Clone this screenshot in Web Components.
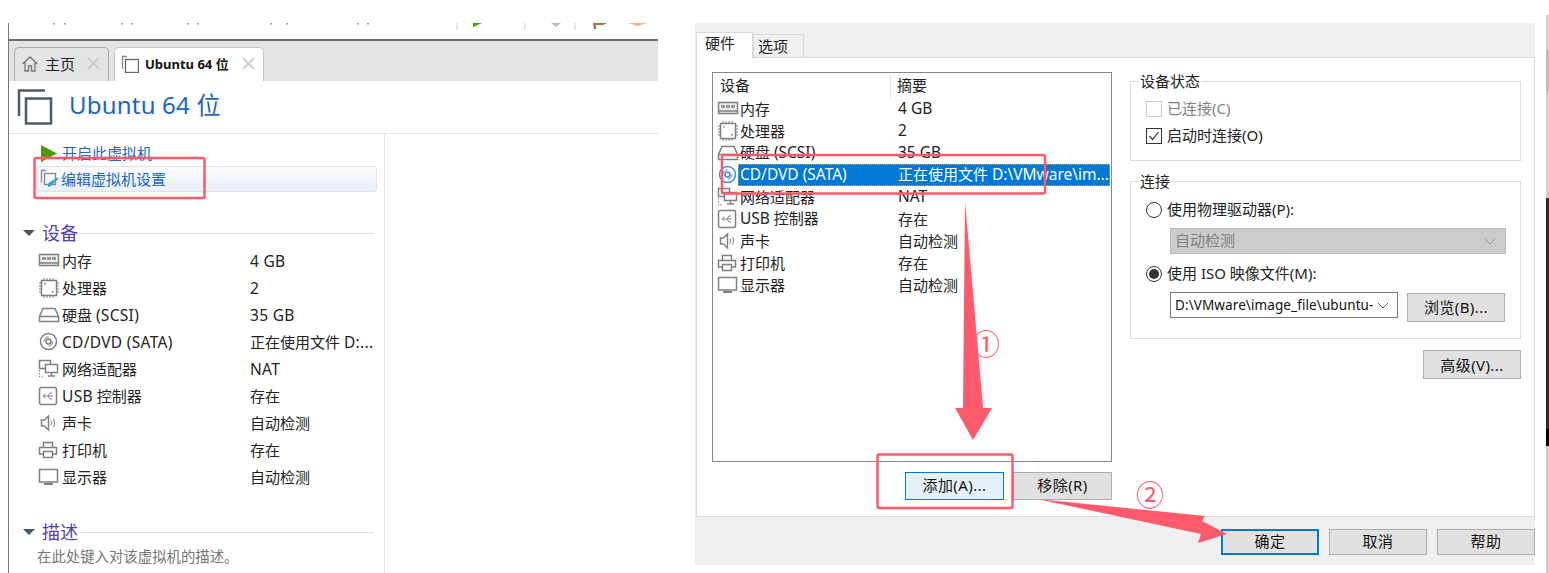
<!DOCTYPE html>
<html lang="zh">
<head>
<meta charset="utf-8">
<title>Ubuntu 64 位</title>
<style>
  html, body { margin: 0; padding: 0; background: #fff; }
  body {
    width: 1549px;
    height: 573px;
    overflow: hidden;
    position: relative;
    font-family: "Noto Sans", "Noto Sans CJK SC", sans-serif;
    font-size: 15px;
    color: #222;
  }
  .page { display: flex; align-items: flex-start; }
</style>
</head>
<body>
<div class="page">
  <vm-library></vm-library>
  <vm-settings></vm-settings>
</div>
<red-marks></red-marks>

<script>
// small grey device icons, shared by both panels
const ICONS = {
  memory: `<rect x="1.5" y="3.5" width="19" height="11" fill="#eee"/><rect x="4" y="6" width="4" height="3" fill="#999" stroke="none"/><rect x="9" y="6" width="4" height="3" fill="#999" stroke="none"/><rect x="14" y="6" width="4" height="3" fill="#999" stroke="none"/><path d="M2 12h18"/>`,
  cpu: `<rect x="3.5" y="2.5" width="15" height="15"/><path d="M6 0v2M9 0v2M12 0v2M15 0v2M6 18v2M9 18v2M12 18v2M15 18v2M1 5h2M1 8h2M1 11h2M1 14h2M19 5h2M19 8h2M19 11h2M19 14h2" stroke-width="1"/><rect x="6" y="5" width="1.5" height="1.5" fill="#777" stroke="none"/><rect x="14" y="13" width="1.5" height="1.5" fill="#777" stroke="none"/>`,
  disk: `<path d="M1.5 11.5 5 3.5h12l3.5 8v5h-19zM1.5 11.5h19"/>`,
  cd: `<circle cx="10.5" cy="9.5" r="8"/><circle cx="10.5" cy="9.5" r="2.5"/><path d="M6 9.5a4.5 4.5 0 0 1 4.5-4.5M15 9.5a4.5 4.5 0 0 1-4.5 4.5" stroke-width="1"/>`,
  net: `<rect x="1.5" y="1.5" width="11" height="8" fill="#fff"/><rect x="7.5" y="5.5" width="12" height="8" fill="#fff"/><path d="M13.5 13.5v3M10 17h7"/><path d="M1.5 11v7h5" stroke-dasharray="1.5 1.5" stroke-width="1"/>`,
  usb: `<rect x="1.5" y="1.5" width="17" height="17" rx="2"/><path d="M5 10h10M7.5 8 5 10l2.5 2M10 10l2-3h2M10 10l2 3h2" stroke-width="1"/>`,
  sound: `<path d="M3.5 7v6h3l4 4V3l-4 4z"/><path d="M13 7.5q1.5 2.5 0 5M15.5 6q2.5 4 0 8" stroke-width="1"/>`,
  printer: `<path d="M5.5 7V2.5h9V7M5.5 14h-4V7.5h17V14h-4"/><rect x="5.5" y="11.5" width="9" height="6"/>`,
  monitor: `<rect x="1.5" y="2.5" width="18" height="12.5"/><path d="M6 17h9" stroke-width="2"/>`
};

function iconSvg(name) {
  return `<svg width="22" height="20" viewBox="0 0 22 20" fill="none" stroke="#808080" stroke-width="1.5">${ICONS[name]}</svg>`;
}

// the latin text of the reference runs wider than the CJK next to it
function latin(text) {
  return text.replace(/[\x21-\x7e]+(?: [\x21-\x7e]+)*/g, m => `<span class="l">${m}</span>`);
}

const DEVICES = [
  ["memory", "内存", "4 GB"],
  ["cpu", "处理器", "2"],
  ["disk", "硬盘 (SCSI)", "35 GB"],
  ["cd", "CD/DVD (SATA)", "正在使用文件 D:..."],
  ["net", "网络适配器", "NAT"],
  ["usb", "USB 控制器", "存在"],
  ["sound", "声卡", "自动检测"],
  ["printer", "打印机", "存在"],
  ["monitor", "显示器", "自动检测"]
];

// section heading of the left panel: triangle, violet title, thin rule
class SectionHead extends HTMLElement {
  constructor() {
    super();
    this.attachShadow({ mode: "open" });
    this.shadowRoot.innerHTML = `
    <style>
      :host { display: flex; align-items: center; height: 26px; margin-right: 3px; }
      .arrow { width: 0; height: 0; margin-left: 14px; border: 6px solid transparent; border-top: 6px solid #4a5560; border-bottom: 0; }
      .title { margin-left: 7px; font-size: 18px; color: #5140ad; line-height: 26px; }
      .rule { flex: 1; height: 1px; background: #ddd; margin-left: 3px; }
    </style>
    <span class="arrow"></span><span class="title"><slot></slot></span><span class="rule"></span>`;
  }
}
customElements.define("section-head", SectionHead);

class VmLibrary extends HTMLElement {
  constructor() {
    super();
    this.attachShadow({ mode: "open" });
    const rows = DEVICES.map(d => `
      <div class="row">
        <span class="ic">${iconSvg(d[0])}</span>
        <span class="name">${latin(d[1])}</span>
        <span class="val">${latin(d[2])}</span>
      </div>`).join("");
    this.shadowRoot.innerHTML = `
    <style>
      :host { display: block; width: 650px; height: 573px; margin-left: 8px; flex: none; box-sizing: border-box; padding-top: 23px; }
      .l { font-size: 15.5px; letter-spacing: 0.3px; }
      .frame { border-left: 1px solid #777; height: 550px; display: flex; flex-direction: column; }
      .toolbar { height: 16px; border-bottom: 2px solid #6c6c6c; flex: none; }
      .toolbar svg { display: block; }
      .tabs { height: 40px; background: #e3e4e6; display: flex; align-items: flex-end; padding-left: 5px; gap: 5px; flex: none; }
      .tab { height: 34px; box-sizing: border-box; border: 1px solid #aaa; border-bottom: 0; border-radius: 5px 5px 0 0; display: flex; align-items: center; font-size: 15px; color: #222; padding-bottom: 2px; }
      .tab.home { width: 95px; padding-left: 6px; }
      .tab.cur { width: 150px; background: #fff; border-color: #c5c5c5; padding-left: 6px; font-weight: bold; font-size: 13px; color: #111; }
      .tab .x { margin-left: auto; margin-right: 8px; }
      .tab .gap { width: 6px; }
      .head { height: 52px; flex: none; border-bottom: 1px solid #e2e2e2; display: flex; align-items: center; padding-left: 8px; }
      .head h1 { margin: 0 0 5px 16px; font-size: 24px; font-weight: normal; color: #1a66c2; line-height: 32px; letter-spacing: 0.2px; }
      .cols { flex: 1; display: flex; }
      .side { width: 376px; box-sizing: border-box; border-right: 1px solid #e2e2e2; padding-right: 7px; }
      .act { display: flex; align-items: center; color: #1a66c2; font-size: 15px; }
      .act svg { flex: none; }
      .act span { margin-bottom: 2px; }
      .act.start { margin-left: 32px; height: 18px; gap: 5px; padding-top: 10px; }
      .act.edit { margin: 4px 0 0 27px; height: 26px; box-sizing: border-box; border: 1px solid #e2e2e2; border-radius: 3px; background: linear-gradient(#fafbfd, #eaf0f9); padding-left: 3px; gap: 1px; }
      .s1 { margin-top: 28px; }
      .s2 { margin-top: 29px; }
      .row { display: flex; align-items: center; height: 27px; padding-left: 29px; color: #222; font-size: 15px; }
      .row .ic { width: 24px; display: flex; }
      .row .name { width: 188px; white-space: nowrap; }
      .row .val { white-space: nowrap; }
      .list { margin-top: 1px; }
      .note { margin: 2px 0 0 28px; font-size: 14.4px; color: #777; white-space: nowrap; line-height: 20px; }
    </style>
    <div class="frame">
      <div class="toolbar">
        <svg width="649" height="8" viewBox="0 0 649 8">
          <path d="M45 0v1.500M56 0v1.500M113 0v1.500M123 0v1.500M179 0v1.500M189 0v1.500M262 0v1.500M278 0v1.500M349 0v1.500M359 0v1.500" stroke="#444"/>
          <path d="M448 0v7M516 0v7M566 0v7" stroke="#ccc"/>
          <path d="M464 0h9l-9 4z" fill="#4e9a06"/>
          <path d="M542 0h10l-5 4z" fill="#bbb"/>
          <path d="M584 0h14l-4 2h-7v4h-2z" fill="#a0704a"/>
          <path d="M619 0h19l-9 3z" fill="#f3b48c"/>
        </svg>
      </div>
      <div class="tabs">
        <div class="tab home">
          <svg width="18" height="18" viewBox="0 0 18 18" fill="none" stroke="#777" stroke-width="1.3"><path d="M1.5 9 9 2l7.500 7M4 7.500V16h3.500v-5h3v5H14V7.500"/></svg>
          <span class="gap"></span>主页
          <svg class="x" width="13" height="13" viewBox="0 0 13 13" stroke="#ccc" stroke-width="1.8"><path d="M1 1l11 11M12 1 1 12"/></svg>
        </div>
        <div class="tab cur">
          <svg width="18" height="18" viewBox="0 0 18 18" fill="none" stroke="#888" stroke-width="1.3"><path d="M6 1.500H1.500V14"/><rect x="4.500" y="4.500" width="13" height="13" stroke="#666"/></svg>
          <span class="gap"></span>Ubuntu 64 位
          <svg class="x" width="13" height="13" viewBox="0 0 13 13" stroke="#ccc" stroke-width="1.8"><path d="M1 1l11 11M12 1 1 12"/></svg>
        </div>
      </div>
      <div class="head">
        <svg width="36" height="36" viewBox="0 0 36 36" fill="none" stroke="#4d5c68" stroke-width="2.5"><path d="M28 1.500H2V27"/><rect x="9" y="9.500" width="25" height="25"/></svg>
        <h1>Ubuntu 64 位</h1>
      </div>
      <div class="cols">
        <div class="side">
          <div class="act start">
            <svg width="16" height="17" viewBox="0 0 16 17"><path d="M0 0 16 8.500 0 17z" fill="#4e9a06"/></svg>
            <span>开启此虚拟机</span>
          </div>
          <div class="act edit">
            <svg width="20" height="20" viewBox="0 0 20 20" fill="none" stroke="#888" stroke-width="1.3"><path d="M6 1.500H1.500v12"/><rect x="4.500" y="4.500" width="11" height="11"/><path d="M8 17l6-5" stroke="#2aa6d6" stroke-width="3"/><path d="M14 12l4-3" stroke="#2aa6d6" stroke-width="2"/></svg>
            <span>编辑虚拟机设置</span>
          </div>
          <section-head class="s1">设备</section-head>
          <div class="list">${rows}</div>
          <section-head class="s2">描述</section-head>
          <div class="note">在此处键入对该虚拟机的描述。</div>
        </div>
      </div>
    </div>`;
  }
}
customElements.define("vm-library", VmLibrary);

// plain windows push button
class DlgButton extends HTMLElement {
  constructor() {
    super();
    this.attachShadow({ mode: "open" });
    this.shadowRoot.innerHTML = `
    <style>
      :host { display: inline-flex; align-items: center; justify-content: center; box-sizing: border-box; height: 26px; border: 1px solid #adadad; background: #e1e1e1; color: #111; font-size: 15px; flex: none; padding-bottom: 3px; letter-spacing: 0.4px; }
      :host([variant="focus"]) { background: #e5f1fb; border-color: #0078d7; }
      :host([variant="default"]) { border: 2px solid #0078d7; }
    </style>
    <slot></slot>`;
  }
}
customElements.define("dlg-button", DlgButton);

// group box with the title sitting on the top border
class GroupBox extends HTMLElement {
  constructor() {
    super();
    this.attachShadow({ mode: "open" });
    this.shadowRoot.innerHTML = `
    <style>
      :host { display: block; position: relative; box-sizing: border-box; border: 1px solid #dcdcdc; }
      .legend { position: absolute; left: 8px; top: -11px; background: #fff; padding: 0 1px; line-height: 20px; font-size: 15px; color: #222; }
    </style>
    <span class="legend">${this.getAttribute("title-text")}</span>
    <slot></slot>`;
  }
}
customElements.define("group-box", GroupBox);

class VmSettings extends HTMLElement {
  constructor() {
    super();
    this.attachShadow({ mode: "open" });
    const rows = DEVICES.map(d => `
      <div class="row ${d[0] === "cd" ? "sel" : ""}">
        <span class="ic">${iconSvg(d[0])}</span>
        <span class="cells">
          <span class="name">${latin(d[1])}</span>
          <span class="val">${latin(d[0] === "cd" ? "正在使用文件 D:\\VMware\\im..." : d[2])}</span>
        </span>
      </div>`).join("");
    this.shadowRoot.innerHTML = `
    <style>
      :host { display: block; margin-left: 37px; margin-top: 23px; width: 854px; height: 542px; flex: none; position: relative; font-size: 15px; }
      .l { font-size: 15.5px; }
      .dlg { width: 840px; height: 542px; background: #f0f0f0; display: flex; flex-direction: column; }
      .tabs { height: 34px; flex: none; display: flex; align-items: flex-end; padding-left: 1px; box-sizing: border-box; }
      .tabs span { display: flex; align-items: center; box-sizing: border-box; color: #222; }
      .tabs .on { width: 57px; height: 26px; margin-bottom: -1px; position: relative; background: #fff; border: 1px solid #d9d9d9; border-bottom: 0; padding-left: 8px; padding-bottom: 6px; }
      .tabs .off { width: 51px; height: 23px; background: #f0f0f0; border: 1px solid #d9d9d9; border-bottom: 0; padding-left: 4px; padding-bottom: 1px; }
      .body { width: 839px; height: 460px; margin-left: 1px; box-sizing: border-box; background: #fff; border: 1px solid #d9d9d9; padding: 14px 13px 0 15px; display: flex; gap: 18px; flex: none; }
      .left { width: 400px; flex: none; display: flex; flex-direction: column; }
      .list { height: 390px; box-sizing: border-box; border: 1px solid #828790; padding: 1px; flex: none; }
      .hdr { display: flex; height: 24px; align-items: center; color: #222; }
      .hdr span { padding-bottom: 2px; box-sizing: border-box; height: 24px; line-height: 22px; }
      .hdr span:first-child { width: 177px; padding-left: 6px; border-right: 1px solid #e5e5e5; }
      .hdr span:last-child { padding-left: 6px; }
      .row { display: flex; align-items: center; height: 22px; padding-left: 4px; white-space: nowrap; color: #222; }
      .row .ic { width: 20px; display: flex; flex: none; }
      .row .ic svg { flex: none; margin-left: -1px; }
      .cells { flex: 1; display: flex; align-items: center; height: 22px; box-sizing: border-box; padding-bottom: 2px; }
      .name { width: 156px; padding-left: 2px; flex: none; }
      .val { padding-left: 2px; }
      .row.sel .cells { background: #0078d7; color: #fff; outline: 1px dotted #d8a24a; outline-offset: -1px; }
      .row.sel svg { stroke: #3c8fd0; }
      .btns { display: flex; justify-content: flex-end; gap: 9px; margin-top: 10px; }
      .btns dlg-button { width: 99px; height: 28px; }
      .right { flex: 1; display: flex; flex-direction: column; padding-top: 9px; }
      .r1 { height: 80px; padding: 13px 0 0 15px; }
      .r2 { height: 158px; margin-top: 20px; padding: 14px 0 0 15px; }
      .line { display: flex; align-items: center; height: 27px; box-sizing: border-box; padding-bottom: 3px; gap: 5px; white-space: nowrap; color: #222; }
      .line.dim { color: #808080; }
      .box { width: 16px; height: 16px; box-sizing: border-box; border: 1px solid #333; display: flex; background: #fff; margin-top: 3px; }
      .dim .box { border-color: #ccc; }
      .radio { width: 16px; height: 16px; box-sizing: border-box; border: 1px solid #333; border-radius: 50%; display: flex; align-items: center; justify-content: center; background: #fff; margin-top: 3px; }
      .radio.on::after { content: ""; width: 10px; height: 10px; border-radius: 50%; background: #333; }
      .sel-dis { margin: 5px 0 0 24px; width: 336px; height: 26px; box-sizing: border-box; background: #ccc; border: 1px solid #bbb; display: flex; align-items: center; justify-content: space-between; padding: 0 9px 3px 4px; color: #808080; }
      .sel-dis svg { margin-top: 3px; }
      .iso { margin-top: 6px; }
      .iso-row { display: flex; align-items: flex-start; margin: 5px 0 0 24px; gap: 9px; }
      .sel-iso { width: 228px; height: 26px; box-sizing: border-box; background: #fff; border: 1px solid #7a7a7a; display: flex; align-items: center; justify-content: space-between; padding: 0 8px 0 4px; color: #111; white-space: nowrap; font-size: 13.5px; letter-spacing: 0.1px; }
      .iso-row dlg-button { width: 98px; height: 29px; margin-top: 1px; }
      .adv { display: flex; justify-content: flex-end; margin-top: 11px; }
      .adv dlg-button { width: 98px; height: 29px; padding-bottom: 1px; }
      .foot { height: 48px; flex: none; display: flex; justify-content: flex-end; gap: 10px; padding-top: 12px; box-sizing: border-box; }
      .foot dlg-button { width: 98px; }
      .bar { position: absolute; right: 0; top: -8px; width: 3px; height: 558px;
        background: linear-gradient(#d0d0d0 0 35px, #bbb 35px 76px, #d0d0d0 76px 183px, #2b2b2b 183px 414px, #000 414px 431px, #ccc 431px); }
    </style>
    <div class="dlg">
      <div class="tabs"><span class="on">硬件</span><span class="off">选项</span></div>
      <div class="body">
        <div class="left">
          <div class="list">
            <div class="hdr"><span>设备</span><span>摘要</span></div>
            ${rows}
          </div>
          <div class="btns">
            <dlg-button variant="focus">添加(A)...</dlg-button>
            <dlg-button>移除(R)</dlg-button>
          </div>
        </div>
        <div class="right">
          <group-box class="r1" title-text="设备状态">
            <div class="line dim"><span class="box"></span>已连接(C)</div>
            <div class="line"><span class="box"><svg width="14" height="14" viewBox="0 0 14 14" fill="none" stroke="#333" stroke-width="1.2"><path d="M2.500 7l3 3.500 6-7.500"/></svg></span>启动时连接(O)</div>
          </group-box>
          <group-box class="r2" title-text="连接">
            <div class="line"><span class="radio"></span>使用物理驱动器(P):</div>
            <div class="sel-dis">自动检测<svg width="12" height="7" viewBox="0 0 12 7" fill="none" stroke="#999"><path d="M1 1l5 5 5-5"/></svg></div>
            <div class="line iso"><span class="radio on"></span>使用 ISO 映像文件(M):</div>
            <div class="iso-row">
              <div class="sel-iso"><span>D:\\VMware\\image_file\\ubuntu-</span><svg width="12" height="7" viewBox="0 0 12 7" fill="none" stroke="#555"><path d="M1 1l5 5 5-5"/></svg></div>
              <dlg-button>浏览(B)...</dlg-button>
            </div>
          </group-box>
          <div class="adv"><dlg-button>高级(V)...</dlg-button></div>
        </div>
      </div>
      <div class="foot">
        <dlg-button variant="default">确定</dlg-button>
        <dlg-button>取消</dlg-button>
        <dlg-button>帮助</dlg-button>
      </div>
    </div>
    <span class="bar"></span>`;
  }
}
customElements.define("vm-settings", VmSettings);

// the red annotations drawn over the screenshot
class RedMarks extends HTMLElement {
  constructor() {
    super();
    this.attachShadow({ mode: "open" });
    this.shadowRoot.innerHTML = `
    <style>
      :host { position: absolute; left: 0; top: 0; width: 1549px; height: 573px; display: block; pointer-events: none; }
      svg { position: absolute; left: 0; top: 0; }
      .num { position: absolute; font-size: 28px; line-height: 32px; color: #fe5a6b; }
    </style>
    <svg width="1549" height="573" fill="none">
      <rect x="34.500" y="158" width="170" height="40" rx="2" stroke="#fe5a6b" stroke-width="2.500"/>
      <rect x="722" y="155" width="323" height="38.500" rx="2" stroke="#fe5a6b" stroke-width="2.500"/>
      <rect x="877.500" y="454.500" width="135" height="53.500" rx="2" stroke="#fe5a6b" stroke-width="2.500"/>
      <path d="M965 201 983 408H992L973 440 955 408H963z" fill="#fe5a6b"/>
      <path d="M1037 499 1205 516 1202 521 1227 534 1198 543 1201 534z" fill="#fe5a6b"/>
    </svg>
    <span class="num" style="left:972px;top:328px">①</span>
    <span class="num" style="left:1136px;top:479px">②</span>`;
  }
}
customElements.define("red-marks", RedMarks);
</script>
</body>
</html>
